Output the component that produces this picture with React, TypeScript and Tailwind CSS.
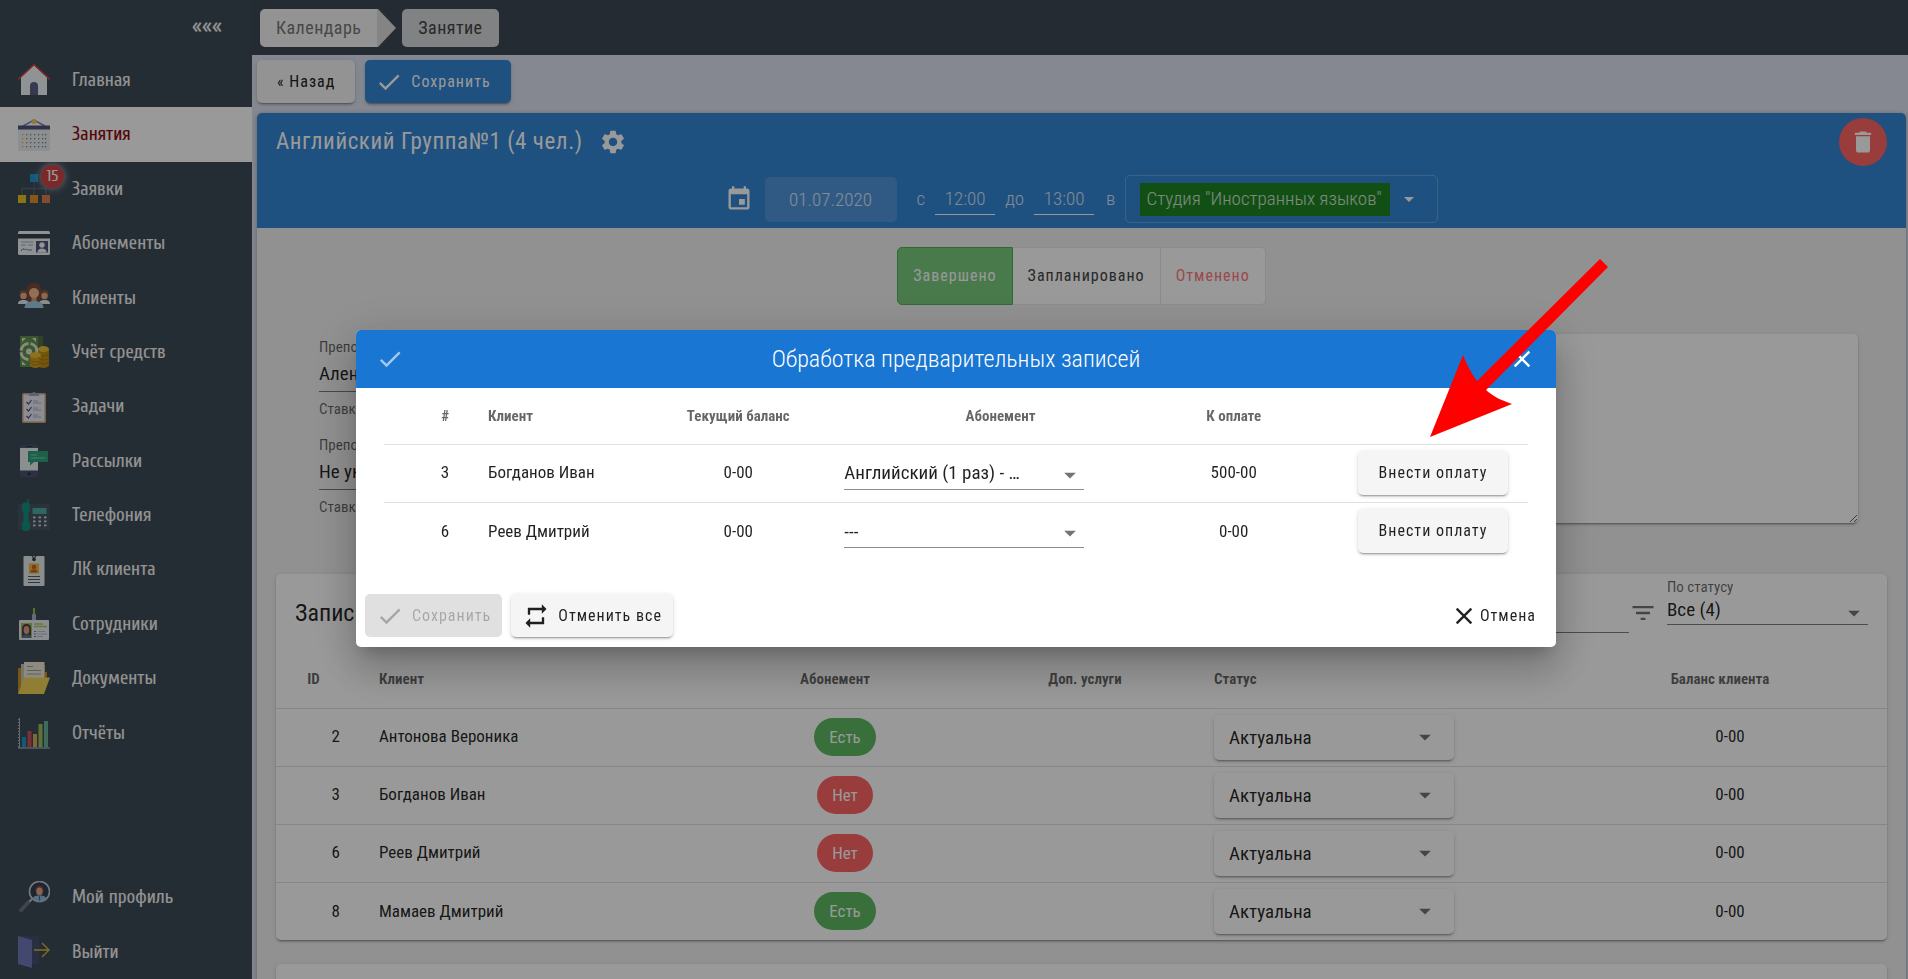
import type { ReactNode } from "react";
import {
  MdArrowDropDown,
  MdCheck,
  MdClose,
  MdDelete,
  MdEvent,
  MdFilterList,
  MdRepeat,
  MdSettings,
} from "react-icons/md";

function Icon({ children }: { children: ReactNode }) {
  return (
    <svg viewBox="0 0 32 32" className="size-8 shrink-0" aria-hidden="true">
      {children}
    </svg>
  );
}

const HomeIcon = (
  <Icon>
    <path d="M3 13 16 1l13 12v18H3z" fill="#f1f5f5" />
    <path d="M0 15.500 16 .8l16 14.700" fill="none" stroke="#d94444" strokeWidth="1.500" />
    <path d="M12 31V22a4 4 0 0 1 8 0v9z" fill="#5c6088" />
  </Icon>
);

const dotRows = [15, 19, 23, 27];
const dotCols = [4, 8, 12, 16, 20, 24, 27];
const CalendarIcon = (
  <Icon>
    <path d="M5 7 16 1l11 6" fill="none" stroke="#7a80b8" strokeWidth="1.500" />
    <circle cx="16" cy="2.500" r="2.500" fill="#f2c65a" />
    <rect x="0" y="7" width="32" height="25" fill="#e8eeee" />
    <rect x="0" y="6.500" width="32" height="4" fill="#4f5478" />
    {dotRows.map((y) =>
      dotCols.map((x, i) => (
        <rect
          key={`${x}-${y}`}
          x={x}
          y={y}
          width="1.300"
          height="1.300"
          fill={i === 0 ? "#e8b44f" : i === 1 ? "#dc6b6b" : "#6f8592"}
        />
      )),
    )}
  </Icon>
);

const RequestsIcon = (
  <Icon>
    <path d="M4 22v-6.500h24V22M16 9v13" fill="none" stroke="#54607a" strokeWidth="1.300" />
    <rect x="12" y="1" width="8" height="8" fill="#1f96cf" />
    <rect x="0" y="22" width="8" height="8" fill="#e5c422" />
    <rect x="12" y="22" width="8" height="8" fill="#e0912a" />
    <rect x="24" y="22" width="8" height="8" fill="#d9804c" />
  </Icon>
);

const SubscriptionIcon = (
  <Icon>
    <rect x="0" y="4" width="32" height="24" rx="1.500" fill="#eef3f3" />
    <rect x="0" y="7" width="32" height="4.500" fill="#35424c" />
    <path d="M3 15h12M3 18h5M10 18h5" stroke="#a5b0b8" strokeWidth="1" />
    <path d="M3 24c2-3 3-3 3-1 2-2 3 0 4 0h4" fill="none" stroke="#6c74b5" strokeWidth="1" />
    <rect x="18" y="14" width="12" height="11.500" fill="#4f5478" />
    <circle cx="24" cy="18" r="2.700" fill="#f3f6f6" />
    <path d="M19.500 25.500c0-3 2-4 4.500-4s4.500 1 4.500 4z" fill="#f3f6f6" />
  </Icon>
);

const ClientsIcon = (
  <Icon>
    <circle cx="5.500" cy="12" r="4" fill="#8a5540" />
    <circle cx="26.500" cy="12" r="4" fill="#8a5540" />
    <circle cx="5.500" cy="14" r="3.200" fill="#e8b088" />
    <circle cx="26.500" cy="14" r="3.200" fill="#e8b088" />
    <path d="M0 22c0-3 2-4 5.500-4s5.500 1 5.500 4zM21 22c0-3 2-4 5.500-4s5.500 1 5.500 4z" fill="#e6ebf0" />
    <path d="M9 19V8c0-5 3-7 7-7s7 2 7 7v11z" fill="#7d4a38" />
    <path d="M13.500 15h5v5h-5z" fill="#d79c72" />
    <circle cx="16" cy="11" r="5" fill="#f0bb90" />
    <path d="M6.500 26c0-5 4-7 9.500-7s9.500 2 9.500 7z" fill="#9ccbe3" />
  </Icon>
);

const MoneyIcon = (
  <Icon>
    <rect x="2" y="0" width="23" height="31" fill="#4d7042" />
    <rect x="2" y="0" width="18" height="31" fill="#64914f" />
    <circle cx="11" cy="15.500" r="8" fill="none" stroke="#dfe8cf" strokeWidth="3" strokeDasharray="11 2" />
    <circle cx="11" cy="15.500" r="3" fill="#dfe8cf" />
    <path d="M4 2h4L4 6zM18 2h-4l4 4zM4 29h4l-4-4z" fill="#dfe8cf" />
    <path d="M20 13v16a5.500 3 0 0 0 11 0V13z" fill="#c08f16" />
    <path d="M12 19v10a5.500 3 0 0 0 11 0V19z" fill="#d29d1a" />
    <path d="M20 17a5.500 3 0 0 0 11 0M20 21a5.500 3 0 0 0 11 0M20 25a5.500 3 0 0 0 11 0M12 23a5.500 3 0 0 0 11 0M12 26a5.500 3 0 0 0 11 0" fill="none" stroke="#9c7510" strokeWidth=".8" />
    <ellipse cx="25.500" cy="13" rx="5.500" ry="3" fill="#e9bd35" />
    <ellipse cx="17.500" cy="19" rx="5.500" ry="3" fill="#e9bd35" />
  </Icon>
);

const TasksIcon = (
  <Icon>
    <rect x="4" y="2" width="24" height="30" rx="1.500" fill="#c8a077" />
    <rect x="5.500" y="3.500" width="21" height="27" fill="#e9ebf5" />
    <path d="M11 5V3h3a2 2 0 0 1 4 0h3v2z" fill="#9aa2c6" />
    {[11, 18, 25].map((y) => (
      <g key={y}>
        <path d={`M8.500 ${y}l2 2 3-4`} fill="none" stroke="#4f5478" strokeWidth="1.200" />
        <path d={`M15 ${y - 1}h5M15 ${y + 1}h8`} stroke="#aab0d0" strokeWidth="1" />
      </g>
    ))}
  </Icon>
);

const MailingIcon = (
  <Icon>
    <rect x="2" y="0" width="18" height="32" rx="2" fill="#4c5370" />
    <rect x="2" y="3" width="18" height="22.500" fill="#e9eef0" />
    <circle cx="11" cy="28.800" r="1.500" fill="#262c44" />
    <path d="M8.500 1.500h5" stroke="#262c44" strokeWidth="1" />
    <path d="M10 6h20v11H16l-4 3.500V17h-2z" fill="#2fa27c" />
    <path d="M13 10h6M13 13h14" stroke="#7fd2b5" strokeWidth="1" />
  </Icon>
);

const PhoneIcon = (
  <Icon>
    <rect x="0" y="5" width="32" height="26" fill="#45565f" />
    <path d="M10 0v6" stroke="#178d7b" strokeWidth="1.500" />
    <path d="M5.500 3.500h5l1.500 2v6l-1.500 1.500v9l1.500 1.500v6l-1.500 2.500h-5L4 29.500v-6L5.500 22v-9L4 11.500v-6z" fill="#149080" />
    <rect x="14.500" y="9" width="14" height="6" fill="#4bb0a4" />
    {[17.500, 21.500, 25.500].map((y) =>
      [15, 20.500, 26].map((x) => (
        <rect key={`${x}-${y}`} x={x} y={y} width="2.500" height="1.800" fill="#cdd8dc" />
      )),
    )}
  </Icon>
);

const CabinetIcon = (
  <Icon>
    <rect x="5.500" y="2" width="21" height="30" rx="1" fill="#e6ebeb" />
    <path d="m13 0 3 5 3-5" fill="none" stroke="#3c4a58" strokeWidth="1.300" />
    <circle cx="16" cy="5.500" r="1.800" fill="#2d3a46" />
    <rect x="11" y="9.500" width="10" height="10" fill="#efb73b" />
    <circle cx="16" cy="13" r="2.200" fill="#c8641e" />
    <path d="M12.500 18.500c0-2 1-3 3.500-3s3.500 1 3.500 3z" fill="#c8641e" />
    <path d="M10 22.500h12M10 25.500h12M10 28.500h12" stroke="#4f6070" strokeWidth="1.100" />
  </Icon>
);

const StaffIcon = (
  <Icon>
    <path d="M16 0v6" stroke="#9cc244" strokeWidth="2" />
    <rect x="14" y="6" width="4" height="8" rx="1" fill="#a7b1cc" />
    <rect x="1" y="12" width="30" height="20" rx="1" fill="#e6e9f0" />
    <rect x="3" y="15" width="11" height="15" fill="#a3c455" />
    <path d="M4 30V21c0-4 2-5 4.500-5S13 17 13 21v9z" fill="#50404a" />
    <ellipse cx="8.500" cy="22" rx="2.800" ry="4" fill="#dba37f" />
    <path d="M4 30c0-3 2-3.500 4.500-3.500S13 27 13 30z" fill="#54779c" />
    <path d="M16 16h9M16 18.500h13" stroke="#a9cf50" strokeWidth="1.300" />
    <path d="M16 23.500h2M16 26h2M16 28.500h2" stroke="#6b76a0" strokeWidth="1" />
    <path d="M19 23.500h8M19 26h10M19 28.500h6" stroke="#b3bad6" strokeWidth="1" />
  </Icon>
);

const DocumentsIcon = (
  <Icon>
    <path d="M0 6h3V3h24v7h2v9L24 32H0z" fill="#c88f22" />
    <path d="M3 2h20v28H3z" fill="#c9c5b2" />
    <path d="M6 0h20.500v28H6z" fill="#ebe8d8" />
    <path d="M9 4.500h6M9 8.500h14M9 12h14" stroke="#a19e90" strokeWidth="1" />
    <path d="M6 15.500h26L26 32H0z" fill="#efd355" />
  </Icon>
);

const ReportsIcon = (
  <Icon>
    <path d="M1.500 1v30" stroke="#a9b4bf" strokeWidth="1" />
    <path d="M.5 2v28" stroke="#a9b4bf" strokeWidth="1" strokeDasharray="1 2" />
    <rect x="4" y="20" width="4" height="10.500" fill="#1f94c0" />
    <rect x="9.500" y="14" width="4" height="16.500" fill="#c9545a" />
    <rect x="15" y="17" width="4" height="13.500" fill="#dba95c" />
    <rect x="20.500" y="7" width="4" height="23.500" fill="#9bbf5b" />
    <rect x="26" y="4" width="4" height="26.500" fill="#68b39a" />
    <path d="M0 31h32" stroke="#8f9cab" strokeWidth="1.500" />
  </Icon>
);

const ProfileIcon = (
  <Icon>
    <path d="m14 18-4 4" stroke="#b8c4d8" strokeWidth="2" />
    <path d="M11 20.500 2 30.500" stroke="#6d7080" strokeWidth="4" />
    <circle cx="21.500" cy="10.500" r="10" fill="#2f3e52" stroke="#c2cad4" strokeWidth="1.600" />
    <path d="M17.500 9c0-3 1.500-4.500 4-4.500s4 1.500 4 4.500v2h-8z" fill="#7d4a38" />
    <ellipse cx="21.500" cy="10.500" rx="3.200" ry="4" fill="#e0a583" />
    <path d="M14.500 18c1-3 3-3.500 7-3.500s6 .5 7 3.500a10 10 0 0 1-14 0z" fill="#8fbcd8" />
    <path d="M21.500 14.500v5" stroke="#47698c" strokeWidth="1.200" />
  </Icon>
);

const ExitIcon = (
  <Icon>
    <rect x="2" y="0" width="19" height="28" fill="#484f70" />
    <path d="m0 0 14 4v28L0 28z" fill="#7179b8" />
    <path d="M16 14h15M24 7l7 7-7 7" fill="none" stroke="#d8b840" strokeWidth="1.300" />
  </Icon>
);

type NavItem = { label: string; icon: ReactNode; active?: boolean; badge?: string };

const navItems: NavItem[] = [
  { label: "Главная", icon: HomeIcon },
  { label: "Занятия", icon: CalendarIcon, active: true },
  { label: "Заявки", icon: RequestsIcon, badge: "15" },
  { label: "Абонементы", icon: SubscriptionIcon },
  { label: "Клиенты", icon: ClientsIcon },
  { label: "Учёт средств", icon: MoneyIcon },
  { label: "Задачи", icon: TasksIcon },
  { label: "Рассылки", icon: MailingIcon },
  { label: "Телефония", icon: PhoneIcon },
  { label: "ЛК клиента", icon: CabinetIcon },
  { label: "Сотрудники", icon: StaffIcon },
  { label: "Документы", icon: DocumentsIcon },
  { label: "Отчёты", icon: ReportsIcon },
];

const accountItems: NavItem[] = [
  { label: "Мой профиль", icon: ProfileIcon },
  { label: "Выйти", icon: ExitIcon },
];

function NavLink({ item }: { item: NavItem }) {
  const tone = item.active ? "bg-white text-[#8f0a0e]" : "text-[#f4f4f4]";
  return (
    <a href="#" className={`flex flex-1 items-center gap-[22px] px-[18px] text-[19px] ${tone}`}>
      <span className="relative">
        {item.icon}
        {item.badge && (
          <span className="absolute -top-2 left-[23px] flex size-[23px] items-center justify-center rounded-full bg-[#cf4444] text-[16px] text-white shadow-[0_0_6px_1px_rgba(255,255,255,0.5)]">
            {item.badge}
          </span>
        )}
      </span>
      {item.label}
    </a>
  );
}

function Sidebar() {
  return (
    <aside className="flex w-[252px] shrink-0 flex-col bg-[#3f4b57] font-['Cuprum','Roboto_Condensed',sans-serif]">
      <div className="flex h-[53px] shrink-0 items-center justify-end pr-[30px]">
        <button type="button" aria-label="Свернуть меню" className="text-[23px] text-[#f4f4f4]">
          «««
        </button>
      </div>
      <nav aria-label="Разделы" className="flex h-[707px] shrink-0 flex-col">
        {navItems.map((item) => (
          <NavLink key={item.label} item={item} />
        ))}
      </nav>
      <nav aria-label="Учётная запись" className="mt-auto flex h-[109px] shrink-0 flex-col">
        {accountItems.map((item) => (
          <NavLink key={item.label} item={item} />
        ))}
      </nav>
    </aside>
  );
}

const raised = "shadow-[0_3px_1px_-2px_rgba(0,0,0,0.2),0_2px_2px_0_rgba(0,0,0,0.14),0_1px_5px_0_rgba(0,0,0,0.12)]";

function LessonHeader() {
  return (
    <header className="flex h-[115px] flex-col justify-between rounded-t-[5px] bg-[#3285d5] px-[19px] py-[5px] text-white">
      <div className="flex h-12 items-center gap-4">
        <h1 className="text-[23px] font-normal tracking-wide">Английский Группа№1 (4 чел.)</h1>
        <button type="button" aria-label="Настройки">
          <MdSettings className="size-7" />
        </button>
        <button
          type="button"
          aria-label="Удалить занятие"
          className="ml-auto flex size-12 items-center justify-center rounded-full bg-[#ff6464]"
        >
          <MdDelete className="size-7" />
        </button>
      </div>
      <div className="flex items-center justify-center text-[19px] font-light text-white/80">
        <MdEvent className="mr-3 size-7 text-white" />
        <input
          aria-label="Дата"
          defaultValue="01.07.2020"
          className="mr-5 h-[45px] w-[132px] rounded-[5px] bg-white/15 text-center"
        />
        <label className="flex items-center gap-[10px]">
          с
          <input defaultValue="12:00" className="h-8 w-[60px] border-b border-white text-center" />
        </label>
        <label className="ml-[10px] flex items-center gap-[10px]">
          до
          <input defaultValue="13:00" className="h-8 w-[60px] border-b border-white text-center" />
        </label>
        <label className="ml-3 flex items-center gap-[10px]">
          в
          <span className="flex h-12 w-[313px] items-center rounded-[5px] border border-white/25 px-[14px]">
            <select className="h-[33px] w-[250px] appearance-none bg-[#1e8423] px-[6px]">
              <option>Студия "Иностранных языков"</option>
            </select>
            <MdArrowDropDown className="ml-[7px] size-6 text-white" />
          </span>
        </label>
      </div>
    </header>
  );
}

function StatusSwitch() {
  return (
    <div className="mx-auto mt-[19px] flex h-[58px] w-max text-[16px] tracking-[1px]">
      <button type="button" className="rounded-l-[5px] border border-[#4eb253] bg-[#7bcb7f] px-[15px] text-white">
        Завершено
      </button>
      <button type="button" className="border-y border-r border-[#e8e8e8] bg-white px-[15px] text-[#444]">
        Запланировано
      </button>
      <button type="button" className="rounded-r-[5px] border-y border-r border-[#e8e8e8] bg-white px-[15px] text-[#ff7b7b]">
        Отменено
      </button>
    </div>
  );
}

function TeacherField({ id, label, value }: { id: string; label: string; value: string }) {
  return (
    <div className="flex h-[98px] flex-col">
      <label htmlFor={id} className="h-[26px] text-[15px] leading-[26px] text-black/60">
        {label}
      </label>
      <select id={id} className="mb-1 h-8 appearance-none border-b border-black/50 pb-1 text-[19px] text-black/87">
        <option>{value}</option>
      </select>
      <span className="text-[15px] leading-[26px] text-black/60">Ставка</span>
    </div>
  );
}

const records = [
  { id: 2, name: "Антонова Вероника", paid: true },
  { id: 3, name: "Богданов Иван", paid: false },
  { id: 6, name: "Реев Дмитрий", paid: false },
  { id: 8, name: "Мамаев Дмитрий", paid: true },
];

function RecordsCard() {
  return (
    <section className={`mx-[19px] mt-11 rounded-[5px] bg-white ${raised}`}>
      <div className="flex h-[77px] items-center px-[19px]">
        <h2 className="text-[24px] font-normal text-black/87">Записи</h2>
        <input aria-label="Поиск" className="ml-auto h-10 w-[360px] border-b border-black/50" />
        <MdFilterList className="size-7 text-black/55" />
        <div className="ml-[10px] flex w-[201px] flex-col self-start pt-[2px]">
          <label htmlFor="status-filter" className="text-[15px] leading-[22px] text-black/60">
            По статусу
          </label>
          <span className="flex h-[27px] items-center border-b border-black/50">
            <select id="status-filter" className="h-[26px] flex-1 appearance-none pb-[2px] text-[19px] leading-[22px] text-black/87">
              <option>Все (4)</option>
            </select>
            <MdArrowDropDown className="mt-1 size-7 text-black/55" />
          </span>
        </div>
      </div>
      <table className="w-full table-fixed text-[17px] text-black/87">
        <colgroup>
          <col className="w-[79px]" />
          <col className="w-[335px]" />
          <col className="w-[310px]" />
          <col className="w-[190px]" />
          <col className="w-[383px]" />
          <col className="w-[314px]" />
        </colgroup>
        <thead>
          <tr className="h-[57px] text-[15px] font-bold text-black/60">
            <th className="pr-1">ID</th>
            <th className="pl-6 text-left">Клиент</th>
            <th className="pr-5">Абонемент</th>
            <th className="pr-5">Доп. услуги</th>
            <th className="pl-6 text-left">Статус</th>
            <th className="pr-5">Баланс клиента</th>
          </tr>
        </thead>
        <tbody>
          {records.map((r) => (
            <tr key={r.id} className="h-[58px] border-t border-black/12">
              <td className="pr-[15px] text-right">{r.id}</td>
              <td className="pl-6">{r.name}</td>
              <td className="text-center">
                <span
                  className={`inline-block h-[38px] rounded-[19px] px-[15px] leading-[38px] text-white ${
                    r.paid ? "bg-[#5eb961]" : "bg-[#ff6464]"
                  }`}
                >
                  {r.paid ? "Есть" : "Нет"}
                </span>
              </td>
              <td />
              <td className="pl-6">
                <span className={`flex h-[45px] w-60 items-center rounded-[5px] bg-white px-[15px] ${raised}`}>
                  <select
                    aria-label={`Статус: ${r.name}`}
                    className="h-10 flex-1 appearance-none pt-[2px] text-[19px]"
                  >
                    <option>Актуальна</option>
                  </select>
                  <MdArrowDropDown className="size-7 text-black/55" />
                </span>
              </td>
              <td className="text-center">0-00</td>
            </tr>
          ))}
        </tbody>
      </table>
    </section>
  );
}

function Page() {
  return (
    <div className="flex min-w-0 flex-1 flex-col bg-[#dee3f0]">
      <nav
        aria-label="Навигация"
        className="flex h-[55px] shrink-0 items-center bg-[#3f4954] pl-2 text-[18px] tracking-wide"
      >
        <a href="#" className="flex h-[38px] items-center text-[#777]">
          <span className="flex h-full items-center rounded-l-[5px] bg-[#f5f5f5] px-4">Календарь</span>
          <svg viewBox="0 0 19 38" className="h-[38px] w-[19px]" aria-hidden="true">
            <path d="M0 0h1l18 19L1 38H0z" fill="#dcdcdc" />
          </svg>
        </a>
        <a href="#" className="ml-[6px] flex h-[38px] items-center rounded-[5px] bg-[#d5d9db] px-4 text-[#444]">
          Занятие
        </a>
      </nav>
      <div className="flex h-[58px] shrink-0 items-start gap-[10px] pt-[5px] pl-[5px] text-[16px] tracking-[1px]">
        <button type="button" className={`h-[43px] rounded-[5px] bg-[#f5f5f5] px-5 text-[#222] ${raised}`}>
          « Назад
        </button>
        <button
          type="button"
          className={`flex h-[43px] items-center gap-2 rounded-[5px] bg-[#3285d5] pr-5 pl-[10px] text-white ${raised}`}
        >
          <MdCheck className="size-7" />
          Сохранить
        </button>
      </div>
      <main className="mr-[2px] ml-[5px] rounded-t-[5px] bg-[#f2f2f2] shadow-[0_1px_5px_rgba(0,0,0,0.3)]">
        <LessonHeader />
        <StatusSwitch />
        <div className="mt-[29px] grid grid-cols-2 gap-8 pr-12 pl-[62px]">
          <div>
            <TeacherField id="teacher-1" label="Преподаватель" value="Алена" />
            <TeacherField id="teacher-2" label="Преподаватель" value="Не указан" />
          </div>
          <textarea aria-label="Комментарий" className={`h-[189px] rounded-[5px] bg-white ${raised}`} />
        </div>
        <RecordsCard />
        <section className={`mx-[19px] mt-6 h-[120px] rounded-[5px] bg-white ${raised}`} />
      </main>
    </div>
  );
}

const bookings = [
  { id: 3, name: "Богданов Иван", balance: "0-00", plan: "Английский (1 раз) - …", due: "500-00" },
  { id: 6, name: "Реев Дмитрий", balance: "0-00", plan: "---", due: "0-00" },
];

function PointerArrow() {
  return (
    <svg
      viewBox="0 0 179 180"
      className="pointer-events-none absolute -top-[72px] -right-[53px] h-[180px] w-[179px]"
      aria-hidden="true"
    >
      <path d="M170 1l8 8L56 132c8 7 15 10 26 14L0 179 33 97c4 10 8 18 14 26z" fill="#f00" />
    </svg>
  );
}

function BookingDialog() {
  return (
    <div
      role="dialog"
      aria-modal="true"
      aria-labelledby="dialog-title"
      className="relative w-[1200px] rounded-[5px] bg-white shadow-[0_11px_15px_-7px_rgba(0,0,0,0.2),0_24px_38px_3px_rgba(0,0,0,0.14),0_9px_46px_8px_rgba(0,0,0,0.12)]"
    >
      <div className="flex h-[58px] items-center rounded-t-[5px] bg-[#1976d2] px-5 text-white">
        <button type="button" aria-label="Применить" className="text-white/60">
          <MdCheck className="size-7" />
        </button>
        <h2 id="dialog-title" className="flex-1 text-center text-[24px] font-light">
          Обработка предварительных записей
        </h2>
        <button type="button" aria-label="Закрыть">
          <MdClose className="size-7" />
        </button>
      </div>
      <div className="px-7">
        <table className="w-full table-fixed text-[17px] text-black/87">
          <colgroup>
            <col className="w-[80px]" />
            <col className="w-[192px]" />
            <col className="w-[164px]" />
            <col className="w-[360px]" />
            <col className="w-[106px]" />
            <col className="w-[241px]" />
          </colgroup>
          <thead>
            <tr className="h-14 text-[15px] text-black/60">
              <th className="pr-[15px] text-right">#</th>
              <th className="pl-6 text-left">Клиент</th>
              <th>Текущий баланс</th>
              <th>Абонемент</th>
              <th>К оплате</th>
              <td />
            </tr>
          </thead>
          <tbody>
            {bookings.map((b) => (
              <tr key={b.id} className="h-[58px] border-t border-black/12">
                <td className="pr-[15px] text-right">{b.id}</td>
                <td className="pl-6">{b.name}</td>
                <td className="text-center">{b.balance}</td>
                <td className="pl-6">
                  <span className="flex h-[33px] w-60 items-center border-b border-black/45">
                    <select
                      aria-label={`Абонемент: ${b.name}`}
                      className="h-8 flex-1 appearance-none pt-[2px] text-[19px]"
                    >
                      <option>{b.plan}</option>
                    </select>
                    <MdArrowDropDown className="mt-1 size-7 text-black/55" />
                  </span>
                </td>
                <td className="text-center">{b.due}</td>
                <td className="pr-5 text-right">
                  <button
                    type="button"
                    className={`h-11 w-[150px] rounded-[5px] bg-[#f5f5f5] text-[16px] tracking-[1px] ${raised}`}
                  >
                    Внести оплату
                  </button>
                </td>
              </tr>
            ))}
          </tbody>
        </table>
      </div>
      <div className="flex items-center px-[9px] pt-[34px] pb-[10px] text-[16px] tracking-[1px] text-black/87">
        <button
          type="button"
          disabled
          className="flex h-[43px] items-center gap-2 rounded-[5px] bg-black/12 px-[11px] text-black/26"
        >
          <MdCheck className="size-7" />
          Сохранить
        </button>
        <button
          type="button"
          className={`ml-[9px] flex h-[43px] items-center gap-2 rounded-[5px] bg-[#f5f5f5] px-[11px] ${raised}`}
        >
          <MdRepeat className="size-7" />
          Отменить все
        </button>
        <button type="button" className="ml-auto flex h-[43px] items-center gap-[2px] px-[11px]">
          <MdClose className="size-7" />
          Отмена
        </button>
      </div>
      <PointerArrow />
    </div>
  );
}

export default function App() {
  return (
    <div className="flex h-screen overflow-hidden font-['Roboto_Condensed','Roboto',sans-serif] leading-normal">
      <Sidebar />
      <Page />
      <div className="fixed inset-0 flex items-center justify-center bg-black/40 pb-[2px] pl-1">
        <BookingDialog />
      </div>
    </div>
  );
}
